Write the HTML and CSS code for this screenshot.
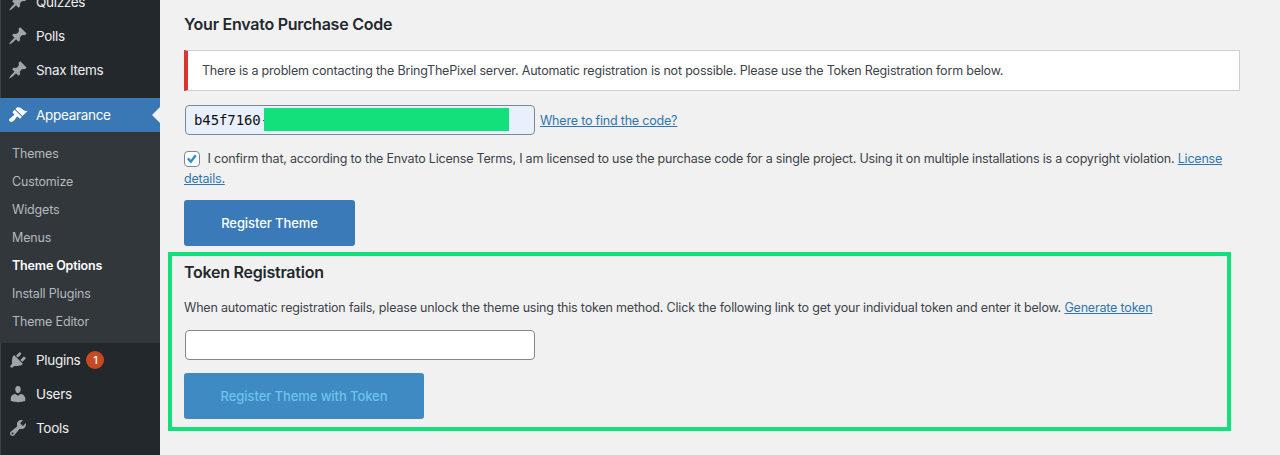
FILE: index.html
```html
<!DOCTYPE html>
<html lang="en">
<head>
<meta charset="utf-8">
<title>Theme Options</title>
<link rel="stylesheet" href="styles.css">
</head>
<body>
<div class="page">
  <aside class="sidebar">
    <nav class="menu">
      <a class="item"><svg class="ico" viewBox="0 0 20 20"><path d="M10.44 3.02l1.82-1.82 6.36 6.35-1.83 1.82c-1.05-.68-2.48-.57-3.41.36l-.75.75c-.92.93-1.04 2.35-.35 3.41l-1.83 1.82-2.41-2.41-2.8 2.79c-.42.42-3.38 2.71-3.8 2.29s1.86-3.39 2.28-3.81l2.79-2.79L4.1 9.36l1.83-1.82c1.05.69 2.48.57 3.4-.36l.75-.75c.93-.92 1.05-2.35.36-3.41z"/></svg><span>Quizzes</span></a>
      <a class="item"><svg class="ico" viewBox="0 0 20 20"><path d="M10.44 3.02l1.82-1.82 6.36 6.35-1.83 1.82c-1.05-.68-2.48-.57-3.41.36l-.75.75c-.92.93-1.04 2.35-.35 3.41l-1.83 1.82-2.41-2.41-2.8 2.79c-.42.42-3.38 2.71-3.8 2.29s1.86-3.39 2.28-3.81l2.79-2.79L4.1 9.36l1.83-1.82c1.05.69 2.48.57 3.4-.36l.75-.75c.93-.92 1.05-2.35.36-3.41z"/></svg><span>Polls</span></a>
      <a class="item"><svg class="ico" viewBox="0 0 20 20"><path d="M10.44 3.02l1.82-1.82 6.36 6.35-1.83 1.82c-1.05-.68-2.48-.57-3.41.36l-.75.75c-.92.93-1.04 2.35-.35 3.41l-1.83 1.82-2.41-2.41-2.8 2.79c-.42.42-3.38 2.71-3.8 2.29s1.86-3.39 2.28-3.81l2.79-2.79L4.1 9.36l1.83-1.82c1.05.69 2.48.57 3.4-.36l.75-.75c.93-.92 1.05-2.35.36-3.41z"/></svg><span>Snax Items</span></a>
      <a class="item active"><svg class="ico" viewBox="0 0 20 20"><path d="M14.48 11.06L7.41 3.99l1.5-1.5c.5-.56 2.3-.47 3.51.32 1.21.8 1.43 1.28 2.91 2.1 1.18.64 2.45 1.26 4.45.85zm-.71.71L6.7 4.7 4.93 6.47c-.39.39-.39 1.02 0 1.41l1.06 1.06c.39.39.39 1.03 0 1.42-.6.6-1.43 1.11-2.21 1.69-.35.26-.7.53-1.01.84C1.43 13.23.4 14.98 1.77 16.35c1.36 1.36 3.11.33 4.45-1.01.3-.31.58-.66.84-1.01.58-.78 1.09-1.61 1.69-2.21.39-.39 1.02-.39 1.41 0l1.06 1.06c.39.39 1.02.39 1.41 0z"/></svg><span>Appearance</span></a>
      <div class="submenu">
        <a>Themes</a>
        <a>Customize</a>
        <a>Widgets</a>
        <a>Menus</a>
        <a class="current">Theme Options</a>
        <a>Install Plugins</a>
        <a>Theme Editor</a>
      </div>
      <a class="item"><svg class="ico" viewBox="0 0 20 20"><path d="M13.11 4.36L9.87 7.6 8 5.73l3.24-3.24c.35-.34 1.05-.2 1.56.32.52.51.66 1.21.31 1.55zm-8 1.77l.91-1.12 9.01 9.01-1.19.84c-.71.71-2.63 1.16-3.82 1.16H6.14L4.9 17.26c-.59.59-1.54.59-2.12 0-.59-.58-.59-1.53 0-2.12l1.24-1.24v-3.88c0-1.13.4-3.19 1.09-3.89zm7.26 3.97l3.24-3.24c.34-.35 1.04-.21 1.55.31.52.51.66 1.21.31 1.55l-3.24 3.25z"/></svg><span>Plugins</span><b class="badge">1</b></a>
      <a class="item"><svg class="ico" viewBox="0 0 20 20"><path d="M10 9.25c-2.27 0-2.73-3.44-2.73-3.44C7 4.02 7.82 2 9.97 2c2.16 0 2.98 2.02 2.71 3.81 0 0-.41 3.44-2.68 3.44zm0 2.57L12.72 10c2.39 0 4.52 2.33 4.52 4.53v2.49s-3.65 1.13-7.24 1.13c-3.65 0-7.24-1.13-7.24-1.13v-2.49c0-2.25 1.94-4.48 4.47-4.48z"/></svg><span>Users</span></a>
      <a class="item"><svg class="ico" viewBox="0 0 20 20"><path d="M16.68 9.77c-1.34 1.34-3.3 1.67-4.95.99l-5.41 6.52c-.99.99-2.59.99-3.58 0s-.99-2.59 0-3.57l6.52-5.42c-.68-1.65-.35-3.61.99-4.95 1.28-1.28 3.12-1.62 4.72-1.06l-2.89 2.89 2.82 2.82 2.86-2.87c.53 1.58.18 3.39-1.08 4.65zM3.81 16.21c.4.39 1.04.39 1.43 0 .4-.4.4-1.04 0-1.43-.39-.4-1.03-.4-1.43 0-.39.39-.39 1.03 0 1.43z"/></svg><span>Tools</span></a>
    </nav>
  </aside>
  <main class="main">
    <section class="purchase">
      <h2 class="title">Your Envato Purchase Code</h2>
      <div class="notice">There is a problem contacting the BringThePixel server. Automatic registration is not possible. Please use the Token Registration form below.</div>
      <div class="code-row">
        <div class="field-wrap">
          <input class="field filled" type="text" value="b45f7160-" readonly>
          <span class="redact"></span>
        </div>
        <a class="link">Where to find the code?</a>
      </div>
      <p class="confirm"><span class="check"><svg viewBox="0 0 16 16"><path d="M2.300 8.300l2-1.900 2.300 2.500 4.600-6 2.200 1.700-6.600 8.600z"/></svg></span>I confirm that, according to the Envato License Terms, I am licensed to use the purchase code for a single project. Using it on multiple installations is a copyright violation. <a class="link">License details.</a></p>
      <button class="btn" type="button">Register Theme</button>
    </section>
    <section class="token">
      <h2 class="title">Token Registration</h2>
      <p class="desc">When automatic registration fails, please unlock the theme using this token method. Click the following link to get your individual token and enter it below. <a class="link">Generate token</a></p>
      <input class="field" type="text">
      <button class="btn disabled" type="button">Register Theme with Token</button>
    </section>
  </main>
</div>
</body>
</html>
```
FILE: styles.css
```css
* { box-sizing: border-box; }
html, body { margin: 0; height: 455px; overflow: hidden; }
body { font-family: Inter, "Liberation Sans", sans-serif; font-size: 13px; color: #3c434a; background: #f1f1f1; }
.page { display: flex; height: 455px; overflow: hidden; }

.sidebar { width: 160px; flex: none; background: #23282d; height: 455px; overflow: hidden; box-shadow: inset 1px 0 #3a3f44; }
.menu { margin-top: -15px; display: flex; flex-direction: column; }
.item { display: flex; align-items: center; height: 34px; padding-left: 8px; color: #eee; font-size: 13.500px; letter-spacing: -.3px; position: relative; }
.item .ico { width: 20px; height: 20px; fill: #a0a5aa; margin-right: 8px; flex: none; }
.item.active { background: #3a78b5; color: #fff; margin-top: 11px; }
.item.active .ico { fill: #fff; }
.item.active::after { content: ""; position: absolute; right: 0; top: 9px; border: 8px solid transparent; border-left-width: 0; border-right-color: #f1f1f1; }
.submenu { background: #32373c; display: flex; flex-direction: column; padding: 8px 0 7px; }
.submenu a { height: 28px; line-height: 28px; padding-left: 12px; font-size: 12.500px; letter-spacing: -.16px; color: #b4b9be; }
.submenu a.current { color: #fff; font-weight: 600; }
.badge { width: 18px; height: 18px; border-radius: 50%; background: #ca4a1f; color: #fff; font-size: 11px; font-weight: 500; letter-spacing: 0; text-align: center; line-height: 18px; margin-left: 6px; }

.main { flex: 1; min-width: 0; padding: 0 40px 0 8px; }
.purchase { padding-left: 16px; }
.title { margin: 0; font-size: 16px; font-weight: 600; letter-spacing: -.25px; line-height: 20px; color: #23282d; }
.purchase .title { padding-top: 14px; }
.notice { margin-top: 16px; height: 41px; line-height: 39px; background: #fff; border: 1px solid #ccd0d4; border-left: 4px solid #dc3232; padding-left: 14px; font-size: 12.500px; letter-spacing: -.195px; }
.code-row { display: flex; align-items: center; margin-top: 14px; padding-left: 1px; gap: 5px; }
.field-wrap { position: relative; display: flex; }
.field { width: 350px; height: 30px; border: 1px solid #7e8993; border-radius: 4px; background: #fff; padding: 0 8px; margin: 0; display: block; outline: 0; }
.field.filled { background: #e8f0fe; font-family: "DejaVu Sans Mono", monospace; font-size: 14px; letter-spacing: -.1px; color: #111; }
.redact { position: absolute; left: 79px; top: 3px; width: 245px; height: 23px; background: #13df7b; }
.link { color: #2f76b0; text-decoration: underline; font-size: 12.500px; letter-spacing: -.195px; }
.confirm { margin: 14px 0 0; line-height: 20px; font-size: 12.500px; letter-spacing: -.195px; }
.check { display: inline-flex; width: 16px; height: 16px; border: 1px solid #7e8993; border-radius: 4px; background: #fff; vertical-align: -3px; margin-right: 7.500px; }
.check svg { width: 14px; height: 14px; fill: #2f8fd0; }
.btn { display: block; width: 171px; height: 46px; margin: 11px 0 0; padding: 0; border: 0; border-radius: 3px; background: #3a7ab9; color: #fff; font: 500 13px Inter, "Liberation Sans", sans-serif; letter-spacing: -.08px; }
.token { margin-top: 6px; width: 1063px; height: 179px; border: 4px solid #13df7b; padding: 6px 0 0 12px; }
.desc { margin: 16px 0 0; line-height: 20px; font-size: 12.500px; letter-spacing: -.18px; }
.desc .link { letter-spacing: -.18px; }
.token .field { margin: 12px 0 0 1px; }
.btn.disabled { width: 240px; margin-top: 13px; background: #3f8ac2; color: #6cc4ea; }
```
